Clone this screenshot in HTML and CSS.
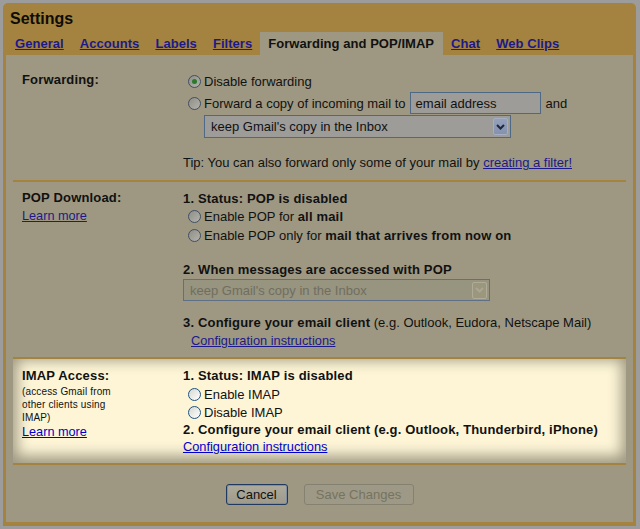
FILE: index.html
```html
<!DOCTYPE html>
<html lang="en">

<head>
    <meta charset="UTF-8">
    <title>Settings</title>
    <link rel="stylesheet" href="styles.css">
</head>

<body>
    <div class="frame">
        <div class="title">Settings</div>

        <div class="tabs">
            <a class="tab" href="#">General</a>
            <a class="tab" href="#">Accounts</a>
            <a class="tab" href="#">Labels</a>
            <a class="tab" href="#">Filters</a>
            <span class="tab active">Forwarding and POP/IMAP</span>
            <a class="tab" href="#">Chat</a>
            <a class="tab" href="#">Web Clips</a>
        </div>

        <div class="content">

            <!-- Forwarding -->
            <div class="section fwd">
                <div class="label"><div class="name">Forwarding:</div></div>
                <div class="body">
                    <div class="opt"><span class="radio on"></span>Disable forwarding</div>
                    <div class="opt fwd-row"><span class="radio"></span>Forward a copy of incoming mail to
                        <span class="input">email address</span> and</div>
                    <div class="select indent">keep Gmail's copy in the Inbox
                        <span class="drop"><svg width="9" height="6" viewBox="0 0 9 6"><polyline points="1,1 4.5,4.5 8,1" fill="none" stroke="#1d2740" stroke-width="2"/></svg></span>
                    </div>
                    <p class="tip">Tip: You can also forward only some of your mail by <a href="#">creating a filter!</a></p>
                </div>
            </div>

            <!-- POP -->
            <div class="section pop">
                <div class="label">
                    <div class="name">POP Download:</div>
                    <a class="learn" href="#">Learn more</a>
                </div>
                <div class="body">
                    <div class="head first">1. Status: POP is disabled</div>
                    <div class="opt tall"><span class="radio"></span>Enable POP for&nbsp;<b>all mail</b></div>
                    <div class="opt tall"><span class="radio"></span>Enable POP only for&nbsp;<b>mail that arrives from now on</b></div>
                    <div class="head step2">2. When messages are accessed with POP</div>
                    <div class="select off">keep Gmail's copy in the Inbox
                        <span class="drop"><svg width="9" height="6" viewBox="0 0 9 6"><polyline points="1,1 4.5,4.5 8,1" fill="none" stroke="#aaa692" stroke-width="2"/></svg></span>
                    </div>
                    <div class="step3"><b>3. Configure your email client</b> (e.g. Outlook, Eudora, Netscape Mail)</div>
                    <a class="config indent8" href="#">Configuration instructions</a>
                </div>
            </div>

            <!-- IMAP (highlighted) -->
            <div class="section imap">
                <div class="label">
                    <div class="name">IMAP Access:</div>
                    <div class="note">(access Gmail from<br>other clients using<br>IMAP)</div>
                    <a class="learn" href="#">Learn more</a>
                </div>
                <div class="body">
                    <div class="head">1. Status: IMAP is disabled</div>
                    <div class="opt imap-opt"><span class="radio"></span>Enable IMAP</div>
                    <div class="opt imap-opt2"><span class="radio"></span>Disable IMAP</div>
                    <div class="head">2. Configure your email client (e.g. Outlook, Thunderbird, iPhone)</div>
                    <a class="config" href="#">Configuration instructions</a>
                </div>
            </div>

            <div class="buttons">
                <button class="btn cancel">Cancel</button>
                <button class="btn save" disabled>Save Changes</button>
            </div>

        </div>
    </div>
</body>

</html>
```

FILE: styles.css
```css
body {
    margin: 0;
    background-color: #9c9c9c;
    font-family: "Liberation Sans", Arial, sans-serif;
    color: #111;
}

.frame {
    margin: 3px 4px 0 3px;
    height: 523px;
    box-sizing: border-box;
    padding: 0 3px 4px 3px;
    background-color: #a3833f;
    border-radius: 5px 5px 0 0;
    display: flex;
    flex-direction: column;
}

.title {
    font-size: 16px;
    font-weight: bold;
    line-height: 19px;
    padding: 6px 0 4px 4px;
    color: #0e0c06;
}

.tabs {
    display: flex;
    padding-left: 1px;
}

.tab {
    font-size: 13px;
    font-weight: bold;
    letter-spacing: 0.05px;
    line-height: 15px;
    padding: 4px 8px;
    color: #1c1a8a;
    text-decoration: underline;
}

.tab.active {
    background-color: #9e9882;
    color: #111;
    text-decoration: none;
    padding-right: 9px;
}

.content {
    flex: 1;
    background-color: #9e9882;
    padding: 0 7px;
}

.section {
    display: flex;
    padding-left: 9px;
    border-bottom: 2px solid #a3833f;
    font-size: 13px;
}

.label {
    width: 161px;
    flex-shrink: 0;
}

b,
.name,
.head {
    letter-spacing: 0.17px;
}

.name {
    font-size: 13px;
    font-weight: bold;
    line-height: 16px;
}

.body {
    flex: 1;
}

a {
    color: #1c1a8a;
    text-decoration: underline;
}

.learn {
    display: block;
    width: max-content;
    margin-top: 2px;
    line-height: 16px;
    font-size: 12.7px;
}

/* radio rows */
.opt {
    display: flex;
    align-items: center;
    height: 18px;
    padding-left: 5px;
    white-space: nowrap;
}

.opt.tall {
    height: 19px;
}

.radio {
    width: 13px;
    height: 13px;
    box-sizing: border-box;
    border-radius: 50%;
    border: 1px solid #3e4f68;
    background: linear-gradient(135deg, #8e8d87, #b4b3ab);
    margin-right: 3px;
    flex-shrink: 0;
    display: flex;
    align-items: center;
    justify-content: center;
}

.radio.on::after {
    content: "";
    width: 5px;
    height: 5px;
    border-radius: 50%;
    background-color: #2a7a2a;
}

.input {
    width: 131px;
    height: 22px;
    box-sizing: border-box;
    border: 1px solid #4e6986;
    background-color: #9d9c98;
    padding: 0 5px;
    margin: 0 5px 0 4px;
    display: flex;
    align-items: center;
}

.select {
    width: 307px;
    height: 23px;
    box-sizing: border-box;
    border: 1px solid #4e6986;
    background-color: #9d9c98;
    display: flex;
    align-items: center;
    padding-left: 6px;
    margin-top: 1px;
}

.select.indent {
    margin-left: 21px;
}

.drop {
    margin-left: auto;
    margin-right: 2px;
    width: 15px;
    height: 17px;
    box-sizing: border-box;
    border: 1px solid #a4aec2;
    border-radius: 2px;
    background: linear-gradient(#95a1ba, #8592ae);
    display: flex;
    align-items: center;
    justify-content: center;
}

.select.off {
    height: 22px;
    border-color: #5f6f86;
    background-color: #97947f;
    color: #716e60;
}

.select.off .drop {
    border-color: #b0ab97;
    background: #9b977f;
}

.tip {
    margin: 17px 0 0;
    line-height: 16px;
}

.fwd {
    padding-top: 17px;
    padding-bottom: 9px;
}

.fwd-row {
    height: 22px;
    margin-top: 2px;
}

.head {
    font-size: 13px;
    font-weight: bold;
    line-height: 16px;
}

.head.first {
    line-height: 17px;
}

.step2 {
    margin-top: 17px;
}

.step3 {
    margin-top: 14px;
    line-height: 16px;
}

.config {
    display: block;
    width: max-content;
    line-height: 16px;
    margin-top: 2px;
    font-size: 12.8px;
}

.indent8 {
    margin-left: 8px;
}

.pop {
    padding-top: 8px;
    padding-bottom: 8px;
}

/* highlighted block */
.imap {
    padding-top: 9px;
    padding-bottom: 8px;
    background-color: #fdf5d6;
    box-shadow: inset 0 -3px 14px 4px #9e9882;
}

.imap a {
    color: #0000cc;
}

.imap .radio {
    border-color: #1d5282;
    background: linear-gradient(135deg, #d8d8d0, #ffffff);
}

.imap-opt {
    margin-top: 1px;
}

.imap-opt2 {
    height: 19px;
}

.note {
    font-size: 10px;
    letter-spacing: 0.15px;
    line-height: 13px;
    margin-top: 1px;
}

.imap .learn {
    margin-top: 0;
}

.imap .config {
    margin-top: 1px;
}

.buttons {
    display: flex;
    justify-content: center;
    gap: 16px;
    padding-top: 19px;
}

.btn {
    height: 21px;
    font-family: "Liberation Sans", Arial, sans-serif;
    font-size: 13px;
    border: 1px solid #858170;
    border-radius: 3px;
    background: linear-gradient(#aeab9c, #9d9a8b);
    color: #111;
    padding: 0;
}

.cancel {
    width: 62px;
    border-color: #1f3960;
    box-shadow: inset 0 0 0 1px #7f8ea5;
}

.save {
    width: 110px;
    color: #77735f;
    background: #9d9986;
}
```
